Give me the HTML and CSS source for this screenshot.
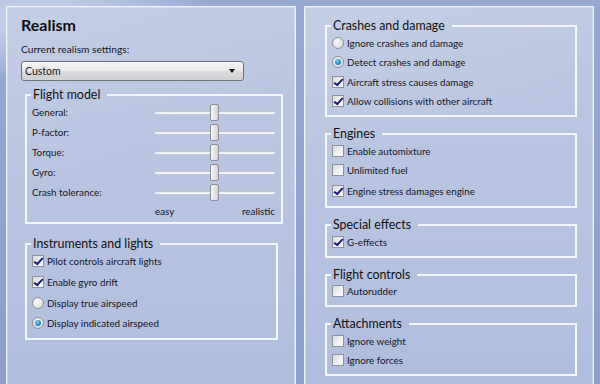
FILE: index.html
```html
<!DOCTYPE html>
<html>
<head>
<meta charset="utf-8">
<link rel="stylesheet" href="styles.css">
</head>
<body>
<div class="screen">
  <section class="panel left">
    <h1 class="title">Realism</h1>
    <div class="caption">Current realism settings:</div>
    <div class="select"><span>Custom</span><span class="arrow"></span></div>

    <fieldset class="group fm">
      <legend>Flight model</legend>
      <div class="srow"><span class="slabel">General:</span><span class="slider"><span class="thumb"></span></span></div>
      <div class="srow"><span class="slabel">P-factor:</span><span class="slider"><span class="thumb"></span></span></div>
      <div class="srow"><span class="slabel">Torque:</span><span class="slider"><span class="thumb"></span></span></div>
      <div class="srow"><span class="slabel">Gyro:</span><span class="slider"><span class="thumb"></span></span></div>
      <div class="srow"><span class="slabel">Crash tolerance:</span><span class="slider"><span class="thumb"></span></span></div>
      <div class="scale"><span>easy</span><span>realistic</span></div>
    </fieldset>

    <fieldset class="group inst">
      <legend>Instruments and lights</legend>
      <div class="row"><span class="cb on"></span>Pilot controls aircraft lights</div>
      <div class="row"><span class="cb on"></span>Enable gyro drift</div>
      <div class="row"><span class="rb"></span>Display true airspeed</div>
      <div class="row"><span class="rb on"></span>Display indicated airspeed</div>
    </fieldset>
  </section>

  <section class="panel right">
    <fieldset class="group r">
      <legend>Crashes and damage</legend>
      <div class="row"><span class="rb"></span>Ignore crashes and damage</div>
      <div class="row"><span class="rb on"></span>Detect crashes and damage</div>
      <div class="row"><span class="cb on"></span>Aircraft stress causes damage</div>
      <div class="row"><span class="cb on"></span>Allow collisions with other aircraft</div>
    </fieldset>
    <fieldset class="group r eng">
      <legend>Engines</legend>
      <div class="row"><span class="cb"></span>Enable automixture</div>
      <div class="row"><span class="cb"></span>Unlimited fuel</div>
      <div class="row"><span class="cb on"></span>Engine stress damages engine</div>
    </fieldset>
    <fieldset class="group r">
      <legend>Special effects</legend>
      <div class="row"><span class="cb on"></span>G-effects</div>
    </fieldset>
    <fieldset class="group r">
      <legend>Flight controls</legend>
      <div class="row"><span class="cb"></span>Autorudder</div>
    </fieldset>
    <fieldset class="group r">
      <legend>Attachments</legend>
      <div class="row"><span class="cb"></span>Ignore weight</div>
      <div class="row"><span class="cb"></span>Ignore forces</div>
    </fieldset>
  </section>
</div>
</body>
</html>
```
FILE: styles.css
```css
* { box-sizing: border-box; }
html, body { margin: 0; padding: 0; }
body {
  width: 600px;
  height: 384px;
  overflow: hidden;
  font-family: Lato, "Noto Sans", sans-serif;
  font-size: 9.8px;
  color: #14161e;
  background:
    radial-gradient(ellipse 260px 90px at 40px 20px, rgba(230,236,250,0.7), rgba(230,236,250,0) 70%),
    linear-gradient(180deg, #97a9d3 0%, #8c9fcd 100%);
}
.screen {
  display: flex;
  gap: 8px;
  padding: 6px 6px 0 6px;
  height: 384px;
  overflow: hidden;
}
.panel {
  width: 290px;
  height: 400px;
  flex: none;
  border: 1px solid #eef2fb;
  box-shadow: inset 0 0 0 1px rgba(255,255,255,0.25);
  background:
    linear-gradient(160deg, rgba(255,255,255,0.12) 0%, rgba(255,255,255,0) 40%),
    linear-gradient(180deg, #bcc7e2 0%, #b7c3e0 55%, #aebcdc 100%);
}
.left { padding: 8px 0 0 14px; }
.right { padding: 12px 0 0 20px; }

.title {
  margin: 0;
  font-size: 16px;
  font-weight: 700;
  line-height: 20px;
  color: #0c0e14;
}
.caption {
  margin-top: 7px;
  line-height: 15px;
  font-size: 10.2px;
}
.select {
  margin-top: 4px;
  width: 223px;
  height: 20px;
  border: 1px solid #6f7178;
  border-radius: 3px;
  background: linear-gradient(180deg, #f4f4f4 0%, #e9e9ea 50%, #dcdcde 51%, #cfd0d3 100%);
  display: flex;
  align-items: center;
  justify-content: space-between;
  padding: 0 8px 0 3px;
  font-size: 10.5px;
}
.arrow {
  width: 0; height: 0;
  border-left: 3.5px solid transparent;
  border-right: 3.5px solid transparent;
  border-top: 4px solid #111;
}

.group {
  margin: 0;
  border: 2px solid #f3f6fc;
  padding: 0 4px 4px 5px;
}
.group legend {
  font-size: 12.4px;
  line-height: 14px;
  padding: 0 7px 0 2px;
  margin-left: -1px;
  color: #111;
}
.fm {
  margin: 7px 0 0 4px;
  width: 258px;
  padding-bottom: 2px;
}
.inst {
  margin: 13px 0 0 4px;
  width: 253px;
  padding-bottom: 4px;
}
.srow {
  display: flex;
  align-items: center;
  height: 20px;
}
.slabel { width: 123px; font-size: 9.8px; }
.slider {
  position: relative;
  width: 120px;
  height: 3px;
  background: linear-gradient(180deg, #a9b0c0 0%, #eef0f5 50%, #ffffff 100%);
  border-radius: 1px;
}
.thumb {
  position: absolute;
  left: 55px;
  top: -7px;
  width: 9px;
  height: 17px;
  border: 1px solid #8a8d95;
  border-radius: 2px;
  background: linear-gradient(90deg, #f8f8f8 0%, #e3e3e6 60%, #cfd0d4 100%);
}
.scale {
  display: flex;
  justify-content: space-between;
  margin-left: 123px;
  width: 120px;
  height: 18px;
  line-height: 18px;
  font-size: 9.8px;
}
.inst .row { height: 20.7px; }

.r { width: 252px; margin-bottom: 10px; }
.eng .row:last-child { height: 22px; }

.row {
  display: flex;
  align-items: center;
  height: 19.5px;
  gap: 3px;
}
.cb {
  width: 12px; height: 12px;
  border: 1px solid #8e9097;
  background: linear-gradient(135deg, #d9dade 0%, #f2f2f4 60%, #fafafa 100%);
  position: relative;
  flex: none;
}
.cb.on::after {
  content: "";
  position: absolute;
  left: 3px; top: 0px;
  width: 3px; height: 7px;
  border-right: 2px solid #1d1a7a;
  border-bottom: 2px solid #1d1a7a;
  transform: rotate(35deg) skewX(-8deg);
}
.rb {
  width: 12px; height: 12px;
  border-radius: 50%;
  border: 1px solid #8e9097;
  background: radial-gradient(circle at 40% 35%, #fafafa 0%, #dcdde1 80%);
  position: relative;
  flex: none;
}
.rb.on::after {
  content: "";
  position: absolute;
  left: 2px; top: 2px;
  width: 6px; height: 6px;
  border-radius: 50%;
  background: radial-gradient(circle at 40% 35%, #7fd0f2 0%, #2386c0 60%, #12507e 100%);
}
```
